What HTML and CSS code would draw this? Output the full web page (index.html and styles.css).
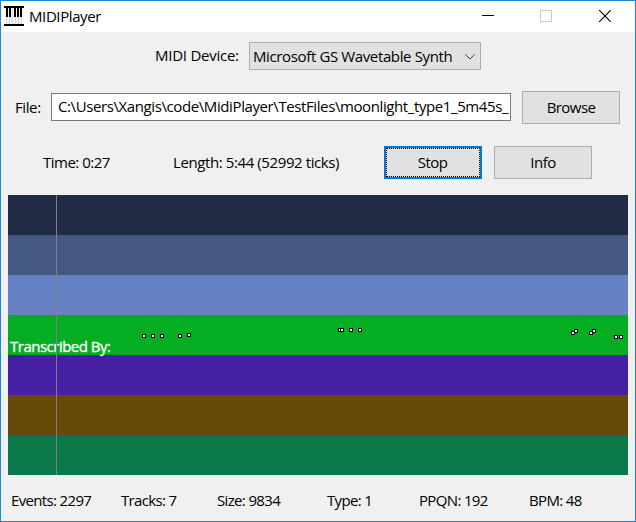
FILE: index.html
```
<!DOCTYPE html>
<html lang="en">
<head>
<meta charset="utf-8">
<title>MIDIPlayer</title>
<link rel="stylesheet" href="styles.css">
</head>
<body>
<main class="window">
  <header class="titlebar">
    <svg class="app-icon" width="20" height="20" viewBox="0 0 20 20" shape-rendering="crispEdges">
      <path fill="#f6f6f6" d="M0 0h20v20H0z"/>
      <path fill="#dadada" d="M2 11h1v7H2zM5 11h1v7H5zM8 2h1v16H8zM11 11h1v7h-1zM14 11h1v7h-1zM17 11h1v7h-1z"/>
      <path fill="#000" d="M0 0h20v2H0zM0 18h20v2H0zM2 2h2v9H2zM5 2h2v9H5zM10 2h2v9h-2zM13 2h2v9h-2zM16 2h2v9h-2z"/>
    </svg>
    <h1 class="title">MIDIPlayer</h1>
    <svg class="controls" width="130" height="14" viewBox="0 0 130 14" shape-rendering="crispEdges">
      <path fill="#000" d="M0 6h12v1H0z"/>
      <path fill="none" stroke="#ccc" d="M58.500 1.500h11v11h-11z"/>
      <path fill="none" stroke="#000" stroke-width="1.100" shape-rendering="auto" d="M117.200 1.200l11.600 11.600M128.800 1.200l-11.600 11.600"/>
    </svg>
  </header>
  <section class="row device-row">
    <span class="label device-label">MIDI Device:</span>
    <div class="select"><span class="device-name">Microsoft GS Wavetable Synth</span>
      <svg width="10" height="6" viewBox="0 0 10 6"><path fill="none" stroke="#404040" d="M.5.500L5 5 9.500.500"/></svg>
    </div>
  </section>
  <section class="row file-row">
    <span class="label file-label">File:</span>
    <div class="input"><span class="path">C:\Users\Xangis\code\MidiPlayer\TestFiles\moonlight_type1_5m45s_</span></div>
    <button class="button browse">Browse</button>
  </section>
  <section class="row play-row">
    <span class="label time">Time: 0:27</span>
    <span class="label length">Length: 5:44 (52992 ticks)</span>
    <button class="button stop">Stop</button>
    <button class="button info">Info</button>
  </section>
  <section class="tracks">
    <div class="track t1"></div>
    <div class="track t2"></div>
    <div class="track t3"></div>
    <div class="track t4"><span class="lyric">Transcribed By:</span>
      <svg class="notes" width="620" height="40" viewBox="0 0 620 40" shape-rendering="crispEdges">
        <defs><g id="n"><path fill="#000" d="M0 0h4v4H0z"/><path fill="#fff" d="M1 1h2v2H1z"/></g></defs>
        <use href="#n" x="134" y="19"/><use href="#n" x="143" y="19"/><use href="#n" x="152" y="19"/>
        <use href="#n" x="170" y="19"/><use href="#n" x="179" y="18"/>
        <use href="#n" x="330" y="13"/><use href="#n" x="332" y="13"/><use href="#n" x="341" y="13"/><use href="#n" x="350" y="13"/>
        <use href="#n" x="563" y="16"/><use href="#n" x="566" y="14"/><use href="#n" x="581" y="16"/><use href="#n" x="584" y="14"/>
        <use href="#n" x="606" y="20"/><use href="#n" x="611" y="20"/>
      </svg>
    </div>
    <div class="track t5"></div>
    <div class="track t6"></div>
    <div class="track t7"></div>
    <div class="playhead"></div>
  </section>
  <footer class="status">
    <span>Events: 2297</span>
    <span>Tracks: 7</span>
    <span>Size: 9834</span>
    <span>Type: 1</span>
    <span>PPQN: 192</span>
    <span>BPM: 48</span>
  </footer>
</main>
</body>
</html>
```
FILE: styles.css
```
* { box-sizing: border-box; }
body { margin: 0; }
.window {
  width: 636px; height: 522px;
  border: 1px solid #1883d7;
  background: #f0f0f0; color: #000;
  font: 15px/18px "Open Sans", "Noto Sans", sans-serif;
  letter-spacing: -0.4px;
  white-space: nowrap;
  overflow: hidden;
}
.titlebar { display: flex; height: 31px; background: #fff; padding-left: 3px; }
.app-icon { margin-top: 5px; }
.title { margin: 6px 0 0 5px; font: inherit; flex: 1; }
.controls { margin: 8px 23px 0 0; }
.row { display: flex; align-items: flex-start; }
.device-row { height: 59px; padding: 10px 0 0 154px; }
.device-label { width: 94px; padding-top: 4px; letter-spacing: -0.25px; }
.select {
  display: flex; align-items: center; justify-content: space-between;
  width: 232px; height: 28px; padding: 1px 5px 0 3px;
  border: 1px solid #adadad; background: #e1e1e1;
}
.device-name { padding-bottom: 2px; letter-spacing: -0.37px; }
.file-row { height: 55px; padding-left: 14px; }
.file-label { width: 36px; padding-top: 7px; }
.input { width: 460px; height: 28px; margin: 2px 11px 0 0; padding: 3px 2px 0 6px; border: 1px solid #7a7a7a; background: #fff; overflow: hidden; }
.button {
  width: 98px; height: 33px; padding: 0 0 2px;
  border: 1px solid #adadad; background: #e1e1e1; color: #000;
  font: inherit; letter-spacing: -0.55px;
}
.play-row { height: 49px; padding-left: 42px; }
.time { width: 130px; padding-top: 7px; letter-spacing: -0.5px; }
.length { width: 211px; padding-top: 7px; }
.stop { padding-right: 1px; border: 2px solid #0078d7; outline: 1px dotted #000; outline-offset: -3px; margin-right: 12px; }
.tracks { position: relative; width: 620px; height: 280px; margin-left: 7px; }
.track { position: relative; height: 40px; }
.t1 { background: #222b44; }
.t2 { background: #445882; }
.t3 { background: #6681c4; }
.t4 { background: #05ad23; }
.t5 { background: #4520a5; }
.t6 { background: #674a0a; }
.t7 { background: #0a784a; }
.lyric { position: absolute; left: 2px; top: 22px; z-index: 1; color: #fff; letter-spacing: -0.5px; -webkit-text-stroke: 0.3px #fff; }
.notes { position: absolute; left: 0; top: 0; }
.playhead { position: absolute; z-index: 2; left: 48px; top: 0; width: 1px; height: 280px; background: #808080; }
.status { display: grid; grid-template-columns: 110px 96px 110px 92px 110px auto; padding: 16px 0 0 10px; letter-spacing: -0.65px; }
```
